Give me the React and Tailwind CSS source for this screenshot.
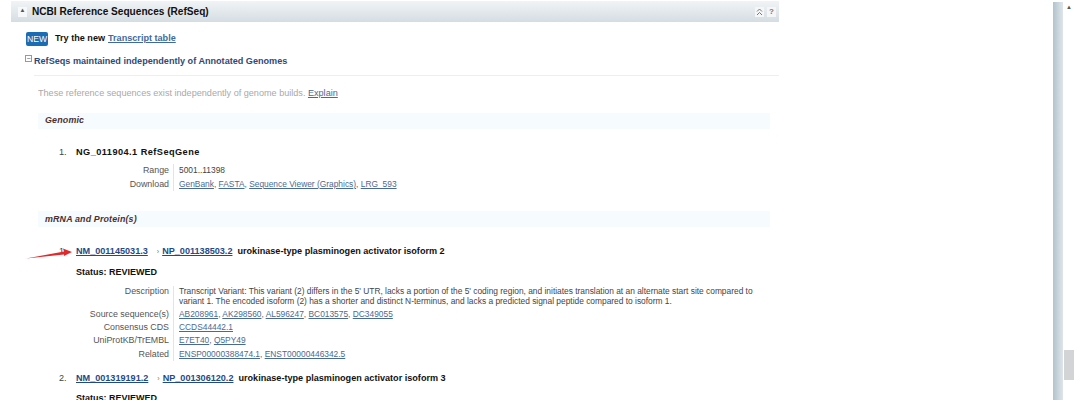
const linkCls = 'text-[#4a6a94] underline';

function Row({ label, tall, children }) {
  const lh = tall ? 'leading-[10.6px]' : 'leading-[13.4px]';
  return (
    <div className="flex">
      <div className={`w-[97px] shrink-0 pr-[4px] text-right text-[8.85px] text-[#555] ${lh}`}>{label}</div>
      <div className={`w-[590px] border-l border-[#e4e4e4] pl-[5px] text-[8.4px] ${lh}`}>{children}</div>
    </div>
  );
}

function Links({ items }) {
  return items.map((item, i) => (
    <span key={item}>
      {i > 0 && <span className="text-[#666]">, </span>}
      <a className={linkCls}>{item}</a>
    </span>
  ));
}

function Transcript({ n, nm, np, name }) {
  return (
    <div className="flex items-baseline text-[9.1px] font-bold text-[#111]">
      <span className="w-[17px] font-normal text-[#444]">{n}.</span>
      <a className="text-[#1f4a86] underline">{nm}</a>
      <span className="ml-[9px] mr-[3px] text-[7px] font-normal text-[#777]">›</span>
      <a className="text-[#1f4a86] underline">{np}</a>
      <span className="ml-[5px]">{name}</span>
    </div>
  );
}

function App() {
  return (
    <div className="relative flex h-[400px] w-[1075px] overflow-hidden bg-white font-['Liberation_Sans',sans-serif] text-[8.7px] text-[#444]">
      <div className="ml-[11px] w-[768px] shrink-0">
        {/* Section header */}
        <div className="mt-[1px] flex h-[21px] items-center bg-gradient-to-b from-[#f1f4f6] to-[#d5dde3] pl-[7px] pr-[3px]">
          <span className="flex h-[10px] w-[9px] items-start justify-center bg-[#f7f8f9] text-[6px] leading-[7px] text-[#555]">▲</span>
          <h2 className="ml-[5px] text-[10.1px] font-bold text-[#111]">NCBI Reference Sequences (RefSeq)</h2>
          <div className="ml-auto flex gap-[3px]">
            <span className="flex h-[10px] w-[9px] items-center justify-center bg-[#f4f6f7]">
              <svg width="7" height="8" viewBox="0 0 7 8" fill="none" stroke="#777" strokeWidth="1">
                <path d="M1 3.5 L3.5 1 L6 3.5 M1 7 L3.5 4.5 L6 7" />
              </svg>
            </span>
            <span className="flex h-[10px] w-[9px] items-center justify-center bg-[#f4f6f7] text-[8px] font-bold leading-none text-[#777]">?</span>
          </div>
        </div>

        <div className="mt-[10px] flex items-center pl-[15px]">
          <span className="flex h-[14px] w-[22px] items-center justify-center rounded-[2px] bg-[#1a6cb4] text-[8.6px] text-white">NEW</span>
          <span className="ml-[7px] text-[9.1px] font-bold text-[#111]">Try the new</span>
          <a className="ml-[3px] text-[9.1px] font-bold text-[#3f6a9e] underline">Transcript table</a>
        </div>

        <div className="mt-[8px] flex pl-[14px]">
          <span className="mt-[1px] flex h-[7px] w-[7px] items-center justify-center border border-[#999] text-[7px] leading-none text-[#555]">−</span>
          <span className="ml-[2px] mt-[1px] text-[9.1px] font-bold text-[#2e4a76]">RefSeqs maintained independently of Annotated Genomes</span>
        </div>

        <div className="ml-[23px] mt-[6px] border-t border-[#eeeeee] pl-[4px]">
          <p className="mt-[11px] text-[9.1px] leading-[12px] text-[#a9a9a9]">
            These reference sequences exist independently of genome builds. <a className="text-[#4a6a94] underline">Explain</a>
          </p>

          <div className="mt-[14px] flex h-[16px] w-[732px] items-center bg-[#f6fbfd] pl-[7px] text-[8.9px] font-bold italic tracking-[0.18px] text-[#4a3030]">Genomic</div>

          <div className="ml-[21px] mt-[17px] flex items-baseline text-[9.2px] font-bold tracking-[0.45px] text-[#111]">
            <span className="w-[17px] font-normal tracking-normal text-[#444]">1.</span>
            <span>NG_011904.1 RefSeqGene</span>
          </div>
          <div className="ml-[38px] mt-[5px]">
            <Row label="Range">5001..11398</Row>
            <Row label="Download">
              <Links items={['GenBank', 'FASTA', 'Sequence Viewer (Graphics)', 'LRG_593']} />
            </Row>
          </div>

          <div className="mt-[20px] flex h-[16px] w-[732px] items-center bg-[#f6fbfd] pl-[7px] text-[8.9px] font-bold italic tracking-[0.15px] text-[#4a3030]">mRNA and Protein(s)</div>

          <div className="ml-[21px] mt-[18px]">
            <Transcript n="1" nm="NM_001145031.3" np="NP_001138503.2" name="urokinase-type plasminogen activator isoform 2" />
            <div className="ml-[17px] mt-[7px] text-[9px] font-bold text-[#111]">Status: REVIEWED</div>
          </div>

          <div className="ml-[38px] mt-[6.5px]">
            <Row label="Description" tall>
              Transcript Variant: This variant (2) differs in the 5' UTR, lacks a portion of the 5' coding region, and initiates translation at an alternate start site compared to variant 1. The encoded isoform (2) has a shorter and distinct N-terminus, and lacks a predicted signal peptide compared to isoform 1.
            </Row>
            <div className="h-[0.5px] w-[98px] border-r border-[#e4e4e4]" />
            <Row label="Source sequence(s)">
              <Links items={['AB208961', 'AK298560', 'AL596247', 'BC013575', 'DC349055']} />
            </Row>
            <Row label="Consensus CDS">
              <a className={linkCls}>CCDS44442.1</a>
            </Row>
            <Row label="UniProtKB/TrEMBL">
              <Links items={['E7ET40', 'Q5PY49']} />
            </Row>
            <Row label="Related">
              <Links items={['ENSP00000388474.1', 'ENST00000446342.5']} />
            </Row>
          </div>

          <div className="ml-[21px] mt-[11px]">
            <Transcript n="2" nm="NM_001319191.2" np="NP_001306120.2" name="urokinase-type plasminogen activator isoform 3" />
            <div className="ml-[17px] mt-[6px] text-[9px] font-bold text-[#111]">Status: REVIEWED</div>
          </div>
        </div>
      </div>

      {/* Annotation arrow */}
      <svg className="absolute left-[24px] top-[246px]" width="50" height="14" viewBox="0 0 50 14">
        <path d="M2 12.5 L40 5.5 L39 2.5 L48 6 L40 10 L40 8.5 Z" fill="#e3282c" />
      </svg>

      {/* Right rail and scrollbar */}
      <div className="ml-auto flex h-full shrink-0">
        <div className="mt-[2px] w-[10px] bg-gradient-to-r from-[#b3c2cc] to-[#dfe6ea]" />
        <div className="flex w-[12px] flex-col items-center bg-white">
          <span className="mt-[3px] text-[6px] leading-[8px] text-[#555]">▲</span>
          <div className="mt-[339px] h-[30px] w-[10px] bg-[#d2d4d6]" />
        </div>
      </div>
    </div>
  );
}

export default App;
